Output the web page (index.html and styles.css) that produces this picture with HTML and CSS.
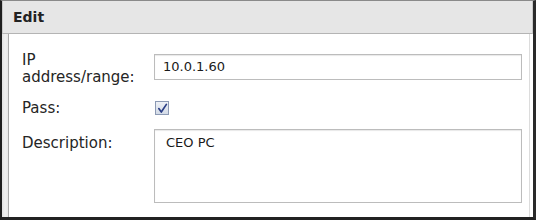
FILE: index.html
```html
<!DOCTYPE html>
<html>
<head>
<meta charset="utf-8">
<link rel="stylesheet" href="styles.css">
</head>
<body>
<div class="window">
  <div class="header">Edit</div>
  <div class="frame">
    <div class="panel">
      <div class="row row-ip">
        <div class="label label-ip">IP<br>address/range:</div>
        <div class="field input">10.0.1.60</div>
      </div>
      <div class="row row-pass">
        <div class="label">Pass:</div>
        <div class="check">
          <svg width="11" height="11" viewBox="0 0 11 11"><path d="M1.8 5.6 L4.3 9 L9.4 1.4" fill="none" stroke="#2b3f86" stroke-width="1.7" stroke-linecap="round" stroke-linejoin="round"/></svg>
        </div>
      </div>
      <div class="row row-desc">
        <div class="label desc-label">Description:</div>
        <div class="field textarea">CEO PC</div>
      </div>
    </div>
  </div>
</div>
</body>
</html>
```
FILE: styles.css
```css
* { box-sizing: border-box; }
html, body { margin: 0; padding: 0; background: #fff; }
body { font-family: "DejaVu Sans", sans-serif; color: #222; }
.window {
  width: 536px;
  height: 220px;
  border-top: 1px solid #8a8a8a;
  border-left: 2px solid #1e1e1e;
  border-right: 3px solid #2a2a2a;
  border-bottom: 3px solid #222;
  display: flex;
  flex-direction: column;
  background: #fff;
}
.header {
  height: 33px;
  flex: none;
  background: #e6e6e6;
  border-bottom: 1px solid #b4b4b4;
  border-left: 1px solid #c8c8c8;
  border-right: 1px solid #c8c8c8;
  font-weight: bold;
  font-size: 14px;
  line-height: 32px;
  padding-left: 10px;
  color: #222;
}
.frame {
  flex: 1;
  display: flex;
  background: linear-gradient(to right, #e2e2e2 0, #f0f0f0 3px, #e8e8e8 6px, #fff 6px);
  padding-left: 6px;
  padding-right: 3px;
}
.panel {
  flex: 1;
  background: #fff;
  border-left: 1px solid #a8a8a8;
  border-right: 1px solid #dcdcdc;
  padding: 18px 0 0 13px;
}
.row { display: flex; align-items: flex-start; }
.label {
  width: 132px;
  font-size: 15px;
  line-height: 16px;
  color: #252525;
}
.label-ip { line-height: 17px; }
.field {
  width: 368px;
  border: 1px solid #bcbcbc;
  box-shadow: inset 0 1px 1px #e8e8e8;
  font-size: 13px;
  color: #1a1a1a;
  background: #fff;
}
.input {
  margin-top: 2px;
  height: 26px;
  line-height: 24px;
  padding-left: 8px;
}
.row-pass { margin-top: 14px; height: 16px; }
.check {
  margin-top: 1px;
  margin-left: 1px;
  width: 14px;
  height: 14px;
  border: 1px solid #8c9ab4;
  background: linear-gradient(#eef1f6, #d3dbe7);
  display: flex;
  align-items: center;
  justify-content: center;
}
.row-desc { margin-top: 13px; }
.desc-label { padding-top: 6px; }
.textarea {
  height: 74px;
  padding: 5px 0 0 11px;
  line-height: 16px;
}
```
